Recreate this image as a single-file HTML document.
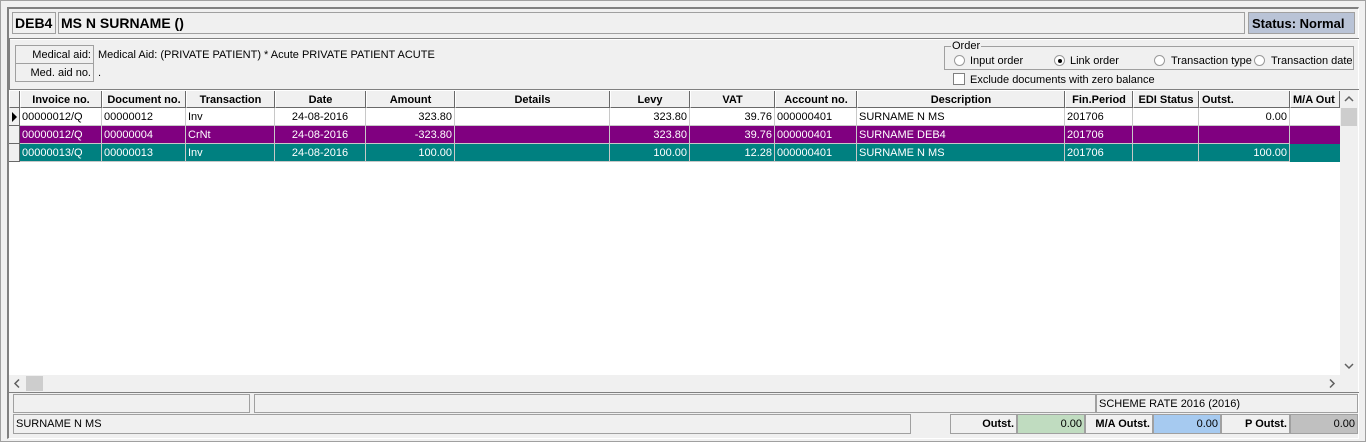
<!DOCTYPE html>
<html><head><style>
*{margin:0;padding:0;box-sizing:border-box}
body{width:1366px;height:442px;background:#f0f0f0;font-family:"Liberation Sans",sans-serif;font-size:11px;color:#000;position:relative;overflow:hidden}
.a{position:absolute}
.box{position:absolute;border:1px solid #a0a0a0;background:#f0f0f0}
.t{position:absolute;white-space:nowrap}
.hd{position:absolute;top:91px;height:17px;background:#f0f0f0;border-right:1px solid #696969;border-bottom:1px solid #696969;border-left:1px solid #fff;font-weight:bold;text-align:center;line-height:18px;overflow:hidden;white-space:nowrap}
.c{position:absolute;height:18px;border-right:1px solid #c8c8c8;border-bottom:1px solid #c8c8c8;line-height:19px;padding:0 2px;white-space:nowrap;overflow:hidden}
.r{text-align:right}
.rad{position:absolute;width:11px;height:11px;border-radius:50%;border:1px solid #999;background:#fff}
</style></head><body>
<div class="a" style="left:0;top:0;width:1366px;height:442px;border:1px solid #a0a0a0"></div>
<div class="a" style="left:7px;top:7px;width:1352px;height:432px;border-top:2px solid #808080;border-left:2px solid #808080;border-right:1px solid #fff;border-bottom:1px solid #fff"></div>
<div class="box" style="left:12px;top:12px;width:44px;height:22px;font-size:14px;font-weight:bold;line-height:21px;padding-left:2px">DEB4</div>
<div class="box" style="left:58px;top:12px;width:1187px;height:22px;font-size:14px;font-weight:bold;line-height:21px;padding-left:2px">MS N SURNAME ()</div>
<div class="box" style="left:1248px;top:12px;width:107px;height:22px;background:#b9c3d6;font-size:13px;font-weight:bold;line-height:21px;padding-left:3px">Status: Normal</div>
<div class="a" style="left:9px;top:38px;width:1350px;height:2px;border-top:1px solid #808080;border-bottom:1px solid #fff"></div>
<div class="a" style="left:9px;top:38px;width:2px;height:52px;border-left:1px solid #808080"></div>
<div class="box" style="left:15px;top:45px;width:79px;height:19px;text-align:right;padding-right:2px;line-height:18px">Medical aid:</div>
<div class="box" style="left:15px;top:63px;width:79px;height:19px;text-align:right;padding-right:2px;line-height:18px">Med. aid no.</div>
<div class="t" style="left:98px;top:49px">Medical Aid: (PRIVATE PATIENT) * Acute PRIVATE PATIENT ACUTE</div>
<div class="t" style="left:98px;top:67px">.</div>
<div class="box" style="left:944px;top:46px;width:410px;height:24px"></div>
<div class="t" style="left:951px;top:40px;background:#f0f0f0;padding:0 1px">Order</div>
<div class="rad" style="left:954px;top:55px"></div><div class="t" style="left:970px;top:55px">Input order</div>
<div class="rad" style="left:1054px;top:55px"></div><div class="a" style="left:1058px;top:59px;width:4px;height:4px;border-radius:50%;background:#000"></div><div class="t" style="left:1070px;top:55px">Link order</div>
<div class="rad" style="left:1154px;top:55px"></div><div class="t" style="left:1171px;top:55px">Transaction type</div>
<div class="rad" style="left:1254px;top:55px"></div><div class="t" style="left:1271px;top:55px">Transaction date</div>
<div class="a" style="left:953px;top:73px;width:12px;height:12px;border:1px solid #808080;background:#fff"></div>
<div class="t" style="left:970px;top:74px">Exclude documents with zero balance</div>
<div class="a" style="left:8px;top:89px;width:1351px;height:304px;border-top:1px solid #808080;border-left:1px solid #808080;border-bottom:1px solid #808080;background:#fff"></div>
<div class="hd" style="left:9px;width:11px"></div>
<div class="hd" style="left:20px;width:82px">Invoice no.</div>
<div class="hd" style="left:102px;width:84px">Document no.</div>
<div class="hd" style="left:186px;width:89px">Transaction</div>
<div class="hd" style="left:275px;width:91px">Date</div>
<div class="hd" style="left:366px;width:89px">Amount</div>
<div class="hd" style="left:455px;width:155px">Details</div>
<div class="hd" style="left:610px;width:80px">Levy</div>
<div class="hd" style="left:690px;width:85px">VAT</div>
<div class="hd" style="left:775px;width:82px">Account no.</div>
<div class="hd" style="left:857px;width:208px">Description</div>
<div class="hd" style="left:1065px;width:68px">Fin.Period</div>
<div class="hd" style="left:1133px;width:66px">EDI Status</div>
<div class="hd" style="left:1199px;width:91px;text-align:left;padding-left:2px">Outst.</div>
<div class="hd" style="left:1290px;width:50px;text-align:left;padding-left:2px">M/A Out</div>
<div class="a" style="left:9px;top:108px;width:11px;height:18px;background:#f0f0f0;border-right:1px solid #696969;border-bottom:1px solid #696969"></div>
<div class="a" style="left:12px;top:112px;width:0;height:0;border-top:5px solid transparent;border-bottom:5px solid transparent;border-left:5px solid #000"></div>
<div class="a" style="left:9px;top:126px;width:11px;height:18px;background:#f0f0f0;border-right:1px solid #696969;border-bottom:1px solid #696969"></div>
<div class="a" style="left:9px;top:144px;width:11px;height:18px;background:#f0f0f0;border-right:1px solid #696969;border-bottom:1px solid #696969"></div>
<div class="a" style="left:20px;top:126px;width:1320px;height:18px;background:#800080"></div>
<div class="a" style="left:20px;top:144px;width:1320px;height:18px;background:#008080"></div>
<div style="color:#000">
<div class="c" style="left:20px;top:108px;width:82px">00000012/Q</div>
<div class="c" style="left:102px;top:108px;width:84px">00000012</div>
<div class="c" style="left:186px;top:108px;width:89px">Inv</div>
<div class="c" style="left:275px;top:108px;width:91px;text-align:center">24-08-2016</div>
<div class="c r" style="left:366px;top:108px;width:89px">323.80</div>
<div class="c" style="left:455px;top:108px;width:155px"></div>
<div class="c r" style="left:610px;top:108px;width:80px">323.80</div>
<div class="c r" style="left:690px;top:108px;width:85px">39.76</div>
<div class="c" style="left:775px;top:108px;width:82px">000000401</div>
<div class="c" style="left:857px;top:108px;width:208px">SURNAME N MS</div>
<div class="c" style="left:1065px;top:108px;width:68px">201706</div>
<div class="c" style="left:1133px;top:108px;width:66px"></div>
<div class="c r" style="left:1199px;top:108px;width:91px">0.00</div>
<div class="c" style="left:1290px;top:108px;width:50px;border-right:none"></div>
</div>
<div style="color:#fff">
<div class="c" style="left:20px;top:126px;width:82px">00000012/Q</div>
<div class="c" style="left:102px;top:126px;width:84px">00000004</div>
<div class="c" style="left:186px;top:126px;width:89px">CrNt</div>
<div class="c" style="left:275px;top:126px;width:91px;text-align:center">24-08-2016</div>
<div class="c r" style="left:366px;top:126px;width:89px">-323.80</div>
<div class="c" style="left:455px;top:126px;width:155px"></div>
<div class="c r" style="left:610px;top:126px;width:80px">323.80</div>
<div class="c r" style="left:690px;top:126px;width:85px">39.76</div>
<div class="c" style="left:775px;top:126px;width:82px">000000401</div>
<div class="c" style="left:857px;top:126px;width:208px">SURNAME DEB4</div>
<div class="c" style="left:1065px;top:126px;width:68px">201706</div>
<div class="c" style="left:1133px;top:126px;width:66px"></div>
<div class="c r" style="left:1199px;top:126px;width:91px"></div>
<div class="c" style="left:20px;top:144px;width:82px">00000013/Q</div>
<div class="c" style="left:102px;top:144px;width:84px">00000013</div>
<div class="c" style="left:186px;top:144px;width:89px">Inv</div>
<div class="c" style="left:275px;top:144px;width:91px;text-align:center">24-08-2016</div>
<div class="c r" style="left:366px;top:144px;width:89px">100.00</div>
<div class="c" style="left:455px;top:144px;width:155px"></div>
<div class="c r" style="left:610px;top:144px;width:80px">100.00</div>
<div class="c r" style="left:690px;top:144px;width:85px">12.28</div>
<div class="c" style="left:775px;top:144px;width:82px">000000401</div>
<div class="c" style="left:857px;top:144px;width:208px">SURNAME N MS</div>
<div class="c" style="left:1065px;top:144px;width:68px">201706</div>
<div class="c" style="left:1133px;top:144px;width:66px"></div>
<div class="c r" style="left:1199px;top:144px;width:91px">100.00</div>
</div>
<div class="a" style="left:1340px;top:90px;width:18px;height:286px;background:#f0f0f0"></div>
<svg class="a" style="left:1340px;top:90px" width="18" height="18"><path d="M5 11 L9 7 L13 11" stroke="#606060" stroke-width="1.5" fill="none"/></svg>
<div class="a" style="left:1341px;top:108px;width:16px;height:18px;background:#cdcdcd"></div>
<svg class="a" style="left:1340px;top:357px" width="18" height="18"><path d="M5 7 L9 11 L13 7" stroke="#606060" stroke-width="1.5" fill="none"/></svg>
<div class="a" style="left:9px;top:375px;width:1349px;height:17px;background:#f0f0f0"></div>
<svg class="a" style="left:9px;top:375px" width="17" height="17"><path d="M10 4.5 L6 8.5 L10 12.5" stroke="#606060" stroke-width="1.5" fill="none"/></svg>
<div class="a" style="left:26px;top:376px;width:17px;height:15px;background:#cdcdcd"></div>
<svg class="a" style="left:1323px;top:375px" width="17" height="17"><path d="M7 4.5 L11 8.5 L7 12.5" stroke="#606060" stroke-width="1.5" fill="none"/></svg>
<div class="box" style="left:13px;top:394px;width:237px;height:19px"></div>
<div class="box" style="left:254px;top:394px;width:842px;height:19px"></div>
<div class="box" style="left:1096px;top:394px;width:262px;height:19px;line-height:18px;padding-left:2px">SCHEME RATE 2016 (2016)</div>
<div class="box" style="left:13px;top:414px;width:898px;height:20px;line-height:19px;padding-left:2px">SURNAME N MS</div>
<div class="box" style="left:950px;top:414px;width:67px;height:20px;line-height:19px;text-align:right;padding-right:2px;font-weight:bold">Outst.</div>
<div class="box" style="left:1017px;top:414px;width:68px;height:20px;line-height:19px;text-align:right;padding-right:2px;background:#c0dcc0">0.00</div>
<div class="box" style="left:1085px;top:414px;width:68px;height:20px;line-height:19px;text-align:right;padding-right:2px;font-weight:bold">M/A Outst.</div>
<div class="box" style="left:1153px;top:414px;width:68px;height:20px;line-height:19px;text-align:right;padding-right:2px;background:#a6caf0">0.00</div>
<div class="box" style="left:1221px;top:414px;width:69px;height:20px;line-height:19px;text-align:right;padding-right:2px;font-weight:bold">P Outst.</div>
<div class="box" style="left:1290px;top:414px;width:68px;height:20px;line-height:19px;text-align:right;padding-right:2px;background:#c0c0c0">0.00</div>
</body></html>
